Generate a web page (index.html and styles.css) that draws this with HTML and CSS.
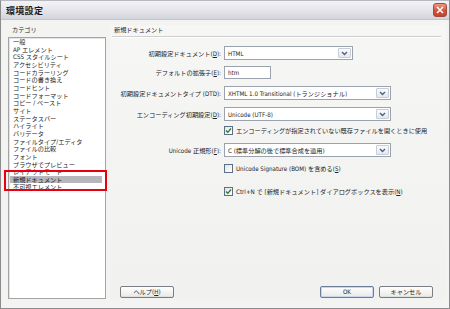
FILE: index.html
```html
<!DOCTYPE html>
<html lang="ja">
<head>
<meta charset="utf-8">
<title>環境設定</title>
<link rel="stylesheet" href="styles.css">
</head>
<body>
<div class="window">
  <div class="titlebar">
    <span class="title">環境設定</span>
    <span class="close"><svg width="8" height="8" viewBox="0 0 8 8"><path d="M1 1L7 7M7 1L1 7" stroke="#fff" stroke-width="1.6"/></svg></span>
  </div>
  <div class="body">
    <div class="sidebar">
      <div class="cat-label">カテゴリ</div>
      <ul class="list">
        <li>一般</li>
        <li>AP エレメント</li>
        <li>CSS スタイルシート</li>
        <li>アクセシビリティ</li>
        <li>コードカラーリング</li>
        <li>コードの書き換え</li>
        <li>コードヒント</li>
        <li>コードフォーマット</li>
        <li>コピー / ペースト</li>
        <li>サイト</li>
        <li>ステータスバー</li>
        <li>ハイライト</li>
        <li>バリデータ</li>
        <li>ファイルタイプ/エディタ</li>
        <li>ファイルの比較</li>
        <li>フォント</li>
        <li>ブラウザでプレビュー</li>
        <li>レイアウトモード</li>
        <li class="selected">新規ドキュメント</li>
        <li>不可視エレメント</li>
      </ul>
      <div class="highlight"></div>
    </div>
    <div class="panel">
      <div class="heading">新規ドキュメント</div>
      <div class="form">
        <div class="label r1">初期設定ドキュメント(<u>D</u>):</div>
        <div class="select w-short r1"><span class="val">HTML</span><span class="arrow"><svg width="7" height="5" viewBox="0 0 7 5"><path d="M1 1L3.5 3.5L6 1" fill="none" stroke="#4d6185" stroke-width="1.4"/></svg></span></div>

        <div class="label r2">デフォルトの拡張子(<u>E</u>):</div>
        <div class="input r2">htm</div>

        <div class="label r3">初期設定ドキュメントタイプ (DTD):</div>
        <div class="select w-long r3"><span class="val">XHTML 1.0 Transitional (トランジショナル)</span><span class="arrow"><svg width="7" height="5" viewBox="0 0 7 5"><path d="M1 1L3.5 3.5L6 1" fill="none" stroke="#4d6185" stroke-width="1.4"/></svg></span></div>

        <div class="label r4">エンコーディング初期設定(<u>D</u>):</div>
        <div class="select w-long r4"><span class="val">Unicode (UTF-8)</span><span class="arrow"><svg width="7" height="5" viewBox="0 0 7 5"><path d="M1 1L3.5 3.5L6 1" fill="none" stroke="#4d6185" stroke-width="1.4"/></svg></span></div>

        <div class="check r5"><span class="box"><svg width="7" height="7" viewBox="0 0 7 7"><path d="M1 3.5L2.8 5.3L6 1.5" fill="none" stroke="#2d7a2d" stroke-width="1.3"/></svg></span>エンコーディングが指定されていない既存ファイルを開くときに使用</div>

        <div class="label r6">Unicode 正規形(<u>F</u>):</div>
        <div class="select w-long r6"><span class="val">C (標準分解の後で標準合成を適用)</span><span class="arrow"><svg width="7" height="5" viewBox="0 0 7 5"><path d="M1 1L3.5 3.5L6 1" fill="none" stroke="#4d6185" stroke-width="1.4"/></svg></span></div>

        <div class="check r7"><span class="box"></span>Unicode Signature (BOM) を含める(<u>S</u>)</div>

        <div class="check r8"><span class="box"><svg width="7" height="7" viewBox="0 0 7 7"><path d="M1 3.5L2.8 5.3L6 1.5" fill="none" stroke="#2d7a2d" stroke-width="1.3"/></svg></span>Ctrl+N で [新規ドキュメント] ダイアログボックスを表示(<u>N</u>)</div>
      </div>
      <div class="buttons">
        <button class="btn">ヘルプ(<u>H</u>)</button>
        <span class="spacer"></span>
        <button class="btn default">OK</button>
        <button class="btn">キャンセル</button>
      </div>
    </div>
  </div>
</div>
</body>
</html>
```

FILE: styles.css
```css
* { box-sizing: border-box; }
html, body { margin: 0; padding: 0; }
body {
  width: 450px;
  height: 309px;
  overflow: hidden;
  background: #f3f3f1;
  font-family: "DejaVu Sans Condensed", "Liberation Sans", "Noto Sans CJK JP", sans-serif;
  font-size: 6.2px;
  color: #1e1e1e;
}
u { text-decoration: underline; }
.window {
  width: 450px;
  height: 309px;
  border: 1px solid #8c8c8c;
  border-top-color: #b8b8c0;
  background: #f3f3f1;
  display: flex;
  flex-direction: column;
}
.titlebar {
  height: 19px;
  flex: none;
  display: flex;
  align-items: center;
  justify-content: space-between;
  padding: 0 2px 0 5px;
  background: linear-gradient(#f3f3f7, #e2e2e9 60%, #d3d3db);
  border-bottom: 1px solid #c4c4cb;
}
.title {
  font-family: "Noto Sans CJK JP", sans-serif;
  font-weight: bold;
  font-size: 9px;
  color: #1a1a1a;
  letter-spacing: 0.3px;
}
.close {
  width: 14px;
  height: 14px;
  border-radius: 3px;
  border: 1px solid #a34a3a;
  background: linear-gradient(#ec9886, #d2543b 55%, #c0432c);
  display: flex;
  align-items: center;
  justify-content: center;
}
.body {
  flex: 1;
  display: flex;
  padding: 5px 3px 9px 7px;
}
.sidebar {
  position: relative;
  width: 98px;
  display: flex;
  flex-direction: column;
}
.cat-label {
  height: 12px;
  line-height: 10px;
  padding-left: 4px;
  font-family: "Noto Sans CJK JP", sans-serif;
}
.list {
  flex: 1;
  margin: 0;
  padding: 0 0 0 1px;
  list-style: none;
  background: #fff;
  border: 1px solid #a4a4a4;
  box-shadow: inset 1px 1px 0 #e4e4e4;
}
.list li {
  height: 7.67px;
  line-height: 7.67px;
  padding-left: 3px;
  white-space: nowrap;
  color: #222;
}
.list li.selected {
  background: #b6b6bb;
  color: #1a1a1a;
  margin-right: 3px;
}
.highlight {
  position: absolute;
  left: -4px;
  top: 145px;
  width: 103px;
  height: 21px;
  border: 2px solid #e8000e;
}
.panel {
  flex: 1;
  display: flex;
  flex-direction: column;
  margin-left: 4px;
  padding: 0 4px 0 2px;
  background: linear-gradient(#f6f6f4, #f1f1ef);
}
.heading {
  height: 12px;
  line-height: 10px;
  padding-left: 2px;
  border-bottom: 1px solid #cfcfcf;
  box-shadow: 0 1px 0 #ffffff;
  margin-right: 1px;
  font-family: "Noto Sans CJK JP", sans-serif;
}
.form {
  display: grid;
  grid-template-columns: 109px auto;
  column-gap: 3px;
  align-items: center;
  justify-items: start;
  margin-top: 9px;
}
.label {
  justify-self: end;
  white-space: nowrap;
  color: #222;
}
.r1 { grid-row: 1; }
.r2 { grid-row: 2; margin-top: 6px; }
.r3 { grid-row: 3; margin-top: 7px; }
.r4 { grid-row: 4; margin-top: 7px; }
.r5 { grid-row: 5; margin-top: 4px; }
.r6 { grid-row: 6; margin-top: 8px; }
.r7 { grid-row: 7; margin-top: 6px; }
.r8 { grid-row: 8; margin-top: 13px; }
.select {
  grid-column: 2;
  height: 14px;
  background: #fff;
  border: 1px solid #9aa3ad;
  display: flex;
  align-items: center;
  justify-content: space-between;
  padding: 0 1px 0 3px;
}
.w-short { width: 129px; }
.w-long { width: 167px; }
.val { white-space: nowrap; color: #222; }
.arrow {
  width: 13px;
  height: 10px;
  border: 1px solid #c8ccd6;
  border-radius: 1px;
  background: linear-gradient(#fbfbfc, #e6e8ee);
  display: flex;
  align-items: center;
  justify-content: center;
}
.input {
  grid-column: 2;
  width: 47px;
  height: 13px;
  background: #fff;
  border: 1px solid #9aa3ad;
  line-height: 11px;
  padding-left: 3px;
  color: #222;
}
.check {
  grid-column: 2;
  display: flex;
  align-items: center;
  height: 10px;
  white-space: nowrap;
  color: #222;
}
.box {
  width: 9px;
  height: 9px;
  border: 1px solid #5a6f88;
  background: linear-gradient(135deg, #e4e4e0, #fff);
  margin-right: 3px;
  display: flex;
  align-items: center;
  justify-content: center;
}
.buttons {
  margin-top: auto;
  display: flex;
  padding: 0 9px 1px 8px;
  gap: 5px;
}
.spacer { flex: 1; }
.btn {
  width: 54px;
  height: 12px;
  padding: 0;
  font: inherit;
  font-size: 6.2px;
  line-height: 10px;
  color: #222;
  border: 1px solid #7a7e86;
  border-radius: 2px;
  background: linear-gradient(#ffffff, #ececea 85%, #d6d6d2);
}
.btn.default {
  border-color: #6b7c99;
  box-shadow: inset 0 0 0 1px #c9d6ee;
}
```
